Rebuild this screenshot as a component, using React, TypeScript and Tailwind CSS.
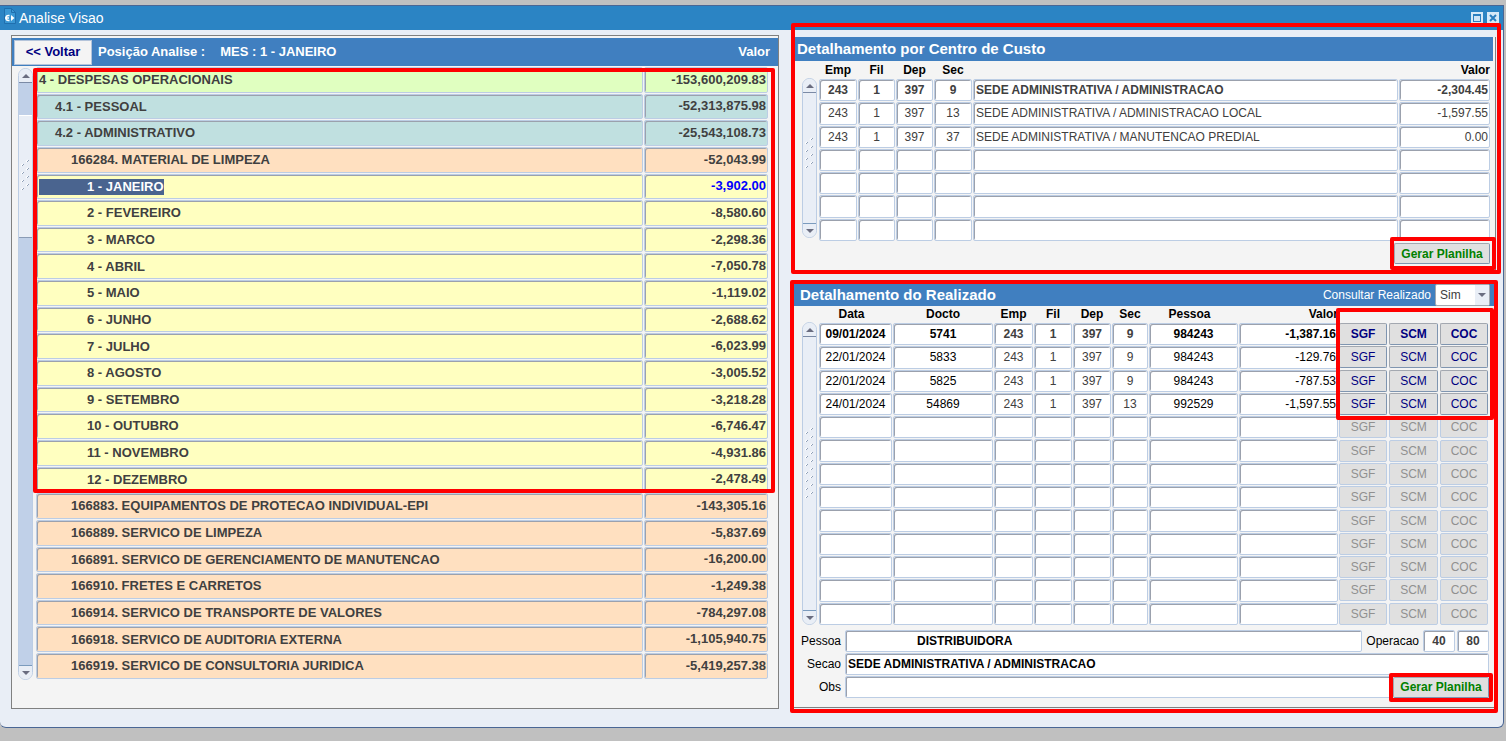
import { useState } from 'react';
import type { ReactNode } from 'react';

interface Conta {
  label: string;
  valor: string;
  level: 0 | 1 | 2 | 3;
}

interface CentroCusto {
  emp: string;
  fil: string;
  dep: string;
  sec: string;
  descricao: string;
  valor: string;
}

interface Lancamento {
  data: string;
  docto: string;
  emp: string;
  fil: string;
  dep: string;
  sec: string;
  pessoa: string;
  valor: string;
}

const CONTAS: Conta[] = [
  { label: '4 - DESPESAS OPERACIONAIS', valor: '-153,600,209.83', level: 0 },
  { label: '4.1 - PESSOAL', valor: '-52,313,875.98', level: 1 },
  { label: '4.2 - ADMINISTRATIVO', valor: '-25,543,108.73', level: 1 },
  { label: '166284. MATERIAL DE LIMPEZA', valor: '-52,043.99', level: 2 },
  { label: '1 - JANEIRO', valor: '-3,902.00', level: 3 },
  { label: '2 - FEVEREIRO', valor: '-8,580.60', level: 3 },
  { label: '3 - MARCO', valor: '-2,298.36', level: 3 },
  { label: '4 - ABRIL', valor: '-7,050.78', level: 3 },
  { label: '5 - MAIO', valor: '-1,119.02', level: 3 },
  { label: '6 - JUNHO', valor: '-2,688.62', level: 3 },
  { label: '7 - JULHO', valor: '-6,023.99', level: 3 },
  { label: '8 - AGOSTO', valor: '-3,005.52', level: 3 },
  { label: '9 - SETEMBRO', valor: '-3,218.28', level: 3 },
  { label: '10 - OUTUBRO', valor: '-6,746.47', level: 3 },
  { label: '11 - NOVEMBRO', valor: '-4,931.86', level: 3 },
  { label: '12 - DEZEMBRO', valor: '-2,478.49', level: 3 },
  { label: '166883. EQUIPAMENTOS DE PROTECAO INDIVIDUAL-EPI', valor: '-143,305.16', level: 2 },
  { label: '166889. SERVICO DE LIMPEZA', valor: '-5,837.69', level: 2 },
  { label: '166891. SERVICO DE GERENCIAMENTO DE MANUTENCAO', valor: '-16,200.00', level: 2 },
  { label: '166910. FRETES E CARRETOS', valor: '-1,249.38', level: 2 },
  { label: '166914. SERVICO DE TRANSPORTE DE VALORES', valor: '-784,297.08', level: 2 },
  { label: '166918. SERVICO DE AUDITORIA EXTERNA', valor: '-1,105,940.75', level: 2 },
  { label: '166919. SERVICO DE CONSULTORIA JURIDICA', valor: '-5,419,257.38', level: 2 },
];

const CENTROS: CentroCusto[] = [
  { emp: '243', fil: '1', dep: '397', sec: '9', descricao: 'SEDE ADMINISTRATIVA / ADMINISTRACAO', valor: '-2,304.45' },
  { emp: '243', fil: '1', dep: '397', sec: '13', descricao: 'SEDE ADMINISTRATIVA / ADMINISTRACAO LOCAL', valor: '-1,597.55' },
  { emp: '243', fil: '1', dep: '397', sec: '37', descricao: 'SEDE ADMINISTRATIVA / MANUTENCAO PREDIAL', valor: '0.00' },
];

const LANCAMENTOS: Lancamento[] = [
  { data: '09/01/2024', docto: '5741', emp: '243', fil: '1', dep: '397', sec: '9', pessoa: '984243', valor: '-1,387.16' },
  { data: '22/01/2024', docto: '5833', emp: '243', fil: '1', dep: '397', sec: '9', pessoa: '984243', valor: '-129.76' },
  { data: '22/01/2024', docto: '5825', emp: '243', fil: '1', dep: '397', sec: '9', pessoa: '984243', valor: '-787.53' },
  { data: '24/01/2024', docto: '54869', emp: '243', fil: '1', dep: '397', sec: '13', pessoa: '992529', valor: '-1,597.55' },
];

const CENTRO_ROWS = 7;
const LANCAMENTO_ROWS = 13;
const SELECTED = 4;

const LEVEL_BG = ['bg-[#e0ffc0]', 'bg-[#c0e0e0]', 'bg-[#ffe0c0]', 'bg-[#ffffc0]'];
const LEVEL_INDENT = ['pl-0', 'pl-4', 'pl-8', 'pl-12'];

const BOX = 'rounded-xs border border-[#bccde4] shadow-[inset_1px_1px_0_#9ba1ad]';
const BUTTON = 'rounded-xs border border-[#a3a8b0] border-r-[#7f95b0] border-b-[#7f95b0] bg-[#e0e0e0]';

function Highlight({ className }: { className: string }) {
  return <div className={`pointer-events-none absolute z-10 rounded-xs border-4 border-[#ff0000] ${className}`} />;
}

function Grip({ rows }: { rows: number }) {
  return (
    <svg width="9" height={rows * 8 + 4} className="shrink-0" aria-hidden="true">
      {Array.from({ length: rows }, (_, i) => (
        <g key={i}>
          <path d={`M5 ${i * 8 + 3}l2 -2M0 ${i * 8 + 7}l2 -2`} stroke="#fff" strokeWidth="1.5" />
          <path d={`M6 ${i * 8 + 3}l2 -2M1 ${i * 8 + 7}l2 -2`} stroke="#8fa0b8" strokeWidth="1" />
        </g>
      ))}
    </svg>
  );
}

function ScrollBar({ className, track, children }: { className: string; track: string; children: ReactNode }) {
  return (
    <div className={`flex w-[15px] shrink-0 flex-col overflow-hidden rounded-full border border-[#bccde4] ${className}`}>
      <button aria-label="Rolar para cima" className="flex h-3.5 shrink-0 items-center justify-center border-b border-[#7b8aa5] bg-[#e9eef6]">
        <svg width="8" height="4"><path d="M0 4L4 0L8 4z" fill="#6a6d80" /></svg>
      </button>
      <div className={`flex flex-1 flex-col items-center ${track}`}>{children}</div>
      <button aria-label="Rolar para baixo" className="flex h-3.5 shrink-0 items-center justify-center border-t border-[#7b9bbd] bg-[#e9eef6]">
        <svg width="8" height="4"><path d="M0 0L4 4L8 0z" fill="#6a6d80" /></svg>
      </button>
    </div>
  );
}

function TitleBar() {
  return (
    <header className="flex h-6 items-center bg-[#2b84c4] pr-1 pl-1">
      <svg width="12" height="16" viewBox="0 0 12 16" className="mb-1 shrink-0" aria-hidden="true">
        <path d="M.5 .5h7l4 4V15.500H.5z" fill="#3a97d4" stroke="#1f6fae" />
        <path d="M7.500 .5V4.500h4" fill="none" stroke="#1f6fae" />
        <path d="M5.500 7.500H4.500a2.500 2.500 0 0 0 0 5H5.500M1 10h4" stroke="#fff" strokeWidth="1.500" fill="none" />
        <path d="M7 7L10.500 10L7 13z" fill="#fff" />
      </svg>
      <h1 className="ml-[3px] flex-1 text-[14px] leading-6 text-white">Analise Visao</h1>
      <button aria-label="Maximizar" className="mr-1">
        <svg width="12" height="12">
          <rect width="12" height="12" fill="#d5e9f8" />
          <rect x="2.500" y="2.500" width="7" height="7" fill="#cfe4f5" stroke="#2b7fc0" />
          <path d="M2 3h8" stroke="#2b7fc0" strokeWidth="2" />
        </svg>
      </button>
      <button aria-label="Fechar">
        <svg width="12" height="12">
          <rect width="12" height="12" fill="#d5e9f8" />
          <path d="M3 3l6 6M9 3l-6 6" stroke="#2b7fc0" strokeWidth="2" />
        </svg>
      </button>
    </header>
  );
}

function ContasPanel() {
  return (
    <section className="border border-[#808080] bg-[#f4f4f4] pt-0.5">
      <div className="flex h-7 items-center bg-[#407fc0] pr-2 pl-0.5 text-[13px] font-bold text-white">
        <button className="h-[25px] w-[78px] border border-[#b4c4da] bg-[#f4f4f4] text-[#000080]">&lt;&lt; Voltar</button>
        <span className="ml-1.5">Posição Analise :</span>
        <span className="ml-[15px] flex-1">MES : 1 - JANEIRO</span>
        <span>Valor</span>
      </div>
      <div className="flex pr-[9px] pb-7 pl-1.5">
        <ScrollBar className="mt-0.5" track="bg-[#c0d0e8]">
          <div className="mt-8 flex h-[123px] w-full items-center justify-center border-t border-b border-t-white border-b-[#8a9bb5] bg-[#e9eef6]">
            <Grip rows={4} />
          </div>
        </ScrollBar>
        <div className="relative ml-0.5 flex-1">
          <table className="h-[614px] w-full table-fixed border-separate border-spacing-px text-[13px] leading-4 font-bold text-[#404040]">
            <colgroup>
              <col />
              <col className="w-[124px]" />
            </colgroup>
            <tbody>
              {CONTAS.map((conta, i) => (
                <tr key={conta.label}>
                  <td className={`${BOX} ${LEVEL_BG[conta.level]} py-0 pr-px pl-0.5`}>
                    <span
                      className={`inline-block align-middle whitespace-nowrap ${LEVEL_INDENT[conta.level]} ${
                        i === SELECTED ? 'bg-[#4a648f] text-white' : ''
                      }`}
                    >
                      {conta.label}
                    </span>
                  </td>
                  <td className={`${BOX} ${LEVEL_BG[conta.level]} px-px text-right ${i === SELECTED ? 'text-[#0000ff]' : ''}`}>
                    {conta.valor}
                  </td>
                </tr>
              ))}
            </tbody>
          </table>
          <Highlight className="top-0.5 -right-1.5 -left-0.5 h-[425px]" />
        </div>
      </div>
    </section>
  );
}

function CentroCustoPanel() {
  return (
    <section className="relative border-r border-b border-[#808080] bg-[#f4f4f4]">
      <h2 className="mr-0.5 h-6 bg-[#407fc0] pl-1 text-[15px] leading-6 font-bold text-white">Detalhamento por Centro de Custo</h2>
      <div className="flex pr-1 pl-[9px]">
        <ScrollBar className="mt-[17px] mb-1" track="bg-[#e9eef6]">
          <div className="mt-11">
            <Grip rows={4} />
          </div>
        </ScrollBar>
        <table className="ml-px h-[181px] w-full table-fixed border-separate border-spacing-px text-center text-[12px] leading-4 text-[#404040]">
          <colgroup>
            <col className="w-[38px]" />
            <col className="w-[37px]" />
            <col className="w-[37px]" />
            <col className="w-[38px]" />
            <col />
            <col className="w-[91px]" />
          </colgroup>
          <thead className="text-black">
            <tr className="h-4">
              <th>Emp</th>
              <th>Fil</th>
              <th>Dep</th>
              <th>Sec</th>
              <td />
              <th className="text-right">Valor</th>
            </tr>
          </thead>
          <tbody>
            {Array.from({ length: CENTRO_ROWS }, (_, i) => {
              const row = CENTROS[i];
              return (
                <tr key={i} className={i === 0 ? 'font-bold' : ''}>
                  <td className={`${BOX} bg-white`}>{row?.emp ?? '\u00a0'}</td>
                  <td className={`${BOX} bg-white`}>{row?.fil}</td>
                  <td className={`${BOX} bg-white`}>{row?.dep}</td>
                  <td className={`${BOX} bg-white`}>{row?.sec}</td>
                  <td className={`${BOX} truncate bg-white px-0.5 text-left`}>{row?.descricao}</td>
                  <td className={`${BOX} bg-white px-px text-right`}>{row?.valor}</td>
                </tr>
              );
            })}
          </tbody>
        </table>
      </div>
      <div className="flex justify-end pt-px pr-[5px] pb-1.5">
        <div className="relative flex">
          <button className={`${BUTTON} h-[21px] w-24 text-[12px] font-bold text-[#008000]`}>Gerar Planilha</button>
          <Highlight className="-top-1.5 -right-1.5 -bottom-1.5 -left-1" />
        </div>
      </div>
      <Highlight className="-top-3.5 -right-1.5 -bottom-1 -left-0.5" />
    </section>
  );
}

function RealizadoPanel() {
  const [consultar, setConsultar] = useState('Sim');

  return (
    <section className="relative border-b border-l border-[#808080] bg-[#f4f4f4] pr-0.5 pb-[9px]">
      <div className="flex h-[22px] items-center bg-[#407fc0] pr-1 pl-1.5 text-white">
        <h2 className="flex-1 text-[15px] font-bold">Detalhamento do Realizado</h2>
        <label htmlFor="consultar" className="mr-1 text-[12px]">Consultar Realizado</label>
        <div className="relative flex">
          <select
            id="consultar"
            value={consultar}
            onChange={(e) => setConsultar(e.target.value)}
            className="h-[22px] w-[55px] appearance-none rounded-xs border border-[#a3a8b0] bg-white pl-1 text-[12px] text-[#404040]"
          >
            <option>Sim</option>
            <option>Nao</option>
          </select>
          <span className="pointer-events-none absolute top-px right-px bottom-px flex w-3.5 items-center justify-center bg-[#e9eef6]">
            <svg width="8" height="4"><path d="M0 0L4 4L8 0z" fill="#6a6d80" /></svg>
          </span>
        </div>
      </div>

      <div className="flex pr-1 pl-2">
        <ScrollBar className="mt-4 mb-px" track="bg-[#e9eef6]">
          <div className="mt-[90px]">
            <Grip rows={9} />
          </div>
        </ScrollBar>
        <div className="relative ml-px flex-1">
          <table className="h-[320px] w-full table-fixed border-separate border-spacing-px text-center text-[12px] leading-4 text-black">
            <colgroup>
              <col className="w-[73px]" />
              <col />
              <col className="w-[39px]" />
              <col className="w-[38px]" />
              <col className="w-[38px]" />
              <col className="w-[36px]" />
              <col className="w-[89px]" />
              <col className="w-[99px]" />
              <col className="w-[49px]" />
              <col className="w-[50px]" />
              <col className="w-[49px]" />
            </colgroup>
            <thead>
              <tr className="h-[15px] leading-[15px]">
                <th className="pr-2">Data</th>
                <th>Docto</th>
                <th>Emp</th>
                <th>Fil</th>
                <th>Dep</th>
                <th>Sec</th>
                <th className="pr-2">Pessoa</th>
                <th className="text-right">Valor</th>
                <td colSpan={3} />
              </tr>
            </thead>
            <tbody>
              {Array.from({ length: LANCAMENTO_ROWS }, (_, i) => {
                const row = LANCAMENTOS[i];
                return (
                  <tr key={i} className={i === 0 ? 'font-bold' : ''}>
                    <td className={`${BOX} bg-white`}>{row?.data}</td>
                    <td className={`${BOX} bg-white`}>{row?.docto}</td>
                    <td className={`${BOX} bg-white text-[#404040]`}>{row?.emp}</td>
                    <td className={`${BOX} bg-white text-[#404040]`}>{row?.fil}</td>
                    <td className={`${BOX} bg-white text-[#404040]`}>{row?.dep}</td>
                    <td className={`${BOX} bg-white text-[#404040]`}>{row?.sec}</td>
                    <td className={`${BOX} bg-white`}>{row?.pessoa}</td>
                    <td className={`${BOX} bg-white px-px text-right`}>{row?.valor}</td>
                    {['SGF', 'SCM', 'COC'].map((acao) => (
                      <td key={acao} className="p-0 pr-px">
                        <button
                          disabled={!row}
                          className={`${BUTTON} block h-[22px] w-full text-[#000080] disabled:border-[#bccde4] disabled:text-[#909090]`}
                        >
                          {acao}
                        </button>
                      </td>
                    ))}
                  </tr>
                );
              })}
            </tbody>
          </table>
          <Highlight className="top-0.5 -right-1 h-[112px] w-[158px]" />
        </div>
      </div>

      <div className="flex flex-col gap-px pt-1 pr-[5px] text-[12px] text-black">
        <div className="flex items-center">
          <label htmlFor="pessoa" className="mr-1 w-[47px] text-right">Pessoa</label>
          <input id="pessoa" defaultValue="DISTRIBUIDORA" className={`${BOX} h-[22px] min-w-0 flex-1 bg-white pl-[71px] font-bold`} />
          <label htmlFor="operacao" className="mx-1">Operacao</label>
          <input id="operacao" defaultValue="40" className={`${BOX} mr-0.5 h-[22px] w-8 bg-white text-center font-bold text-[#404040]`} />
          <input aria-label="Operacao complemento" defaultValue="80" className={`${BOX} h-[22px] w-8 bg-white text-center font-bold text-[#404040]`} />
        </div>
        <div className="flex items-center">
          <label htmlFor="secao" className="mr-1 w-[47px] text-right">Secao</label>
          <input id="secao" defaultValue="SEDE ADMINISTRATIVA / ADMINISTRACAO" className={`${BOX} h-[22px] min-w-0 flex-1 bg-white pl-0.5 font-bold`} />
        </div>
        <div className="flex items-center">
          <label htmlFor="obs" className="mr-1 w-[47px] text-right">Obs</label>
          <input id="obs" className={`${BOX} h-[22px] min-w-0 flex-1 bg-white pl-0.5`} />
          <div className="relative flex">
            <button className={`${BUTTON} h-[21px] w-24 text-[12px] font-bold text-[#008000]`}>Gerar Planilha</button>
            <Highlight className="-top-1 -right-1 -bottom-1 -left-1" />
          </div>
        </div>
      </div>
      <Highlight className="-top-1 -right-0.5 -bottom-1.5 -left-1" />
    </section>
  );
}

export default function App() {
  return (
    <div className="min-h-screen bg-white pr-1 font-['Liberation_Sans',Arial,sans-serif]">
      <div className="min-h-screen bg-[#c0c0c0] pt-[5px] pr-0.5">
        <div className="overflow-hidden rounded-b-md border-t border-r border-b border-[#4a6694] bg-[#e9eef6]">
          <TitleBar />
          <main className="grid grid-cols-[768fr_703fr] gap-x-3.5 pt-[5px] pr-[7px] pb-[18px] pl-[11px]">
            <div className="flex min-w-0 flex-col *:flex-1">
              <ContasPanel />
            </div>
            <div className="flex min-w-0 flex-col gap-[13px] pt-0.5">
              <CentroCustoPanel />
              <RealizadoPanel />
            </div>
          </main>
        </div>
      </div>
    </div>
  );
}
